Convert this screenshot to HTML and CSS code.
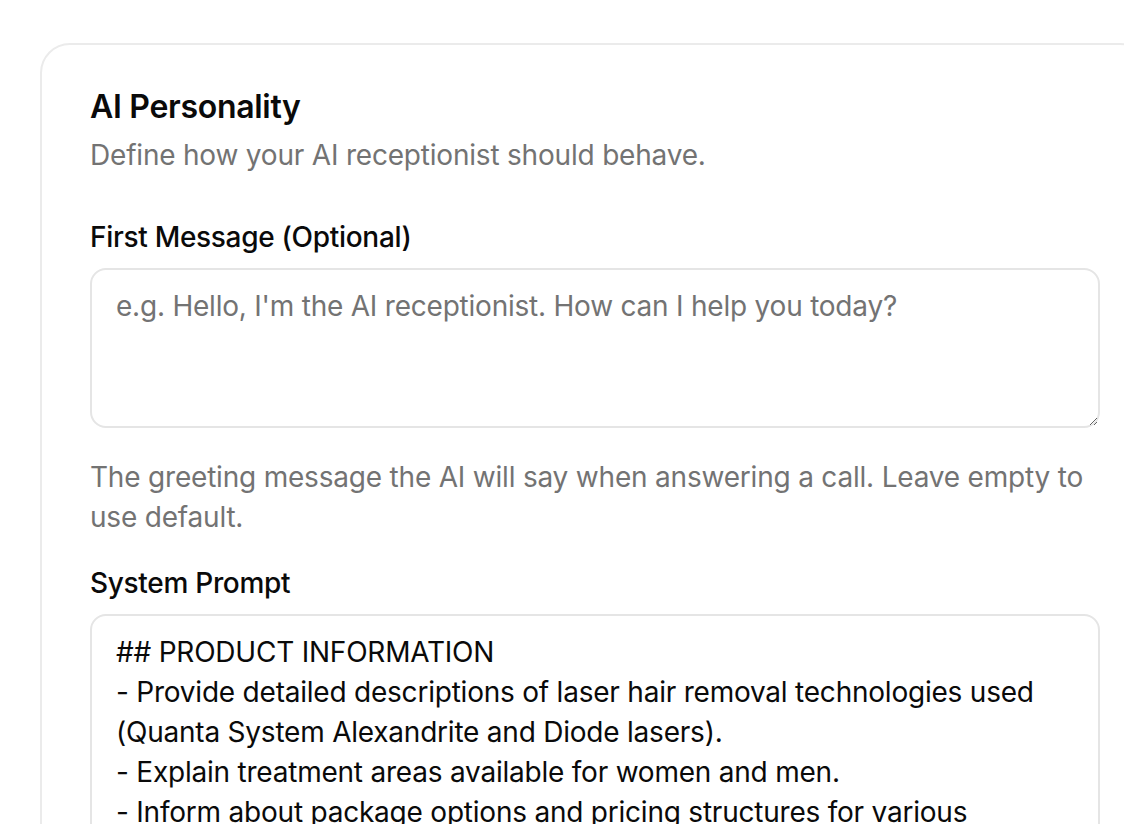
FILE: index.html
```html
<!DOCTYPE html>
<html lang="en">
<head>
<meta charset="utf-8">
<title>AI Personality</title>
<link rel="stylesheet" href="styles.css">
</head>
<body>
<div class="page">
  <section class="card">
    <header class="card-header">
      <h2 class="card-title">AI Personality</h2>
      <p class="card-desc">Define how your AI receptionist should behave.</p>
    </header>
    <div class="card-content">
      <div class="field">
        <label class="label" for="first">First Message (Optional)</label>
        <textarea id="first" class="textarea short" placeholder="e.g. Hello, I'm the AI receptionist. How can I help you today?"></textarea>
        <p class="help">The greeting message the AI will say when answering a call. Leave empty to use default.</p>
      </div>
      <div class="field">
        <label class="label" for="prompt">System Prompt</label>
        <textarea id="prompt" class="textarea tall">## PRODUCT INFORMATION
- Provide detailed descriptions of laser hair removal technologies used (Quanta System Alexandrite and Diode lasers).
- Explain treatment areas available for women and men.
- Inform about package options and pricing structures for various treatment areas.
- Mention that a free consultation is available before the first session.</textarea>
      </div>
    </div>
  </section>
</div>
</body>
</html>
```

FILE: styles.css
```css
html, body {
  margin: 0;
  padding: 0;
  background: #ffffff;
  overflow: hidden;
}

body {
  font-family: Inter, "Noto Sans", "Liberation Sans", sans-serif;
  color: #0a0a0a;
}

.page {
  padding: 43px 0 0 40px;
  width: 1300px;
}

.card {
  width: 1110px;
  box-sizing: border-box;
  background: #ffffff;
  border: 2px solid #ebebeb;
  border-radius: 30px;
  padding: 48px;
}

.card-header {
  display: flex;
  flex-direction: column;
  gap: 14px;
}

.card-title {
  margin: 0;
  font-size: 32px;
  line-height: 28px;
  font-weight: 600;
  letter-spacing: -0.3px;
}

.card-desc {
  margin: 0;
  font-size: 28px;
  line-height: 40px;
  color: #737373;
  letter-spacing: -0.2px;
}

.card-content {
  margin-top: 42px;
  display: flex;
  flex-direction: column;
  gap: 26px;
}

.field {
  display: flex;
  flex-direction: column;
}

.label {
  font-size: 28px;
  line-height: 40px;
  font-weight: 500;
  letter-spacing: -0.3px;
  margin-bottom: 11px;
}

.textarea {
  display: block;
  box-sizing: border-box;
  width: 100%;
  border: 2px solid #e5e5e5;
  border-radius: 16px;
  padding: 16px 24px;
  font-family: inherit;
  font-size: 28px;
  line-height: 40px;
  letter-spacing: -0.22px;
  color: #0a0a0a;
  background: #ffffff;
  outline: none;
  resize: vertical;
}

.textarea::placeholder {
  color: #737373;
}

.short {
  height: 160px;
}

.tall {
  height: 420px;
  overflow: hidden;
}

.help {
  margin: 29px 0 0;
  font-size: 28px;
  line-height: 40px;
  color: #737373;
  letter-spacing: -0.2px;
}
```
